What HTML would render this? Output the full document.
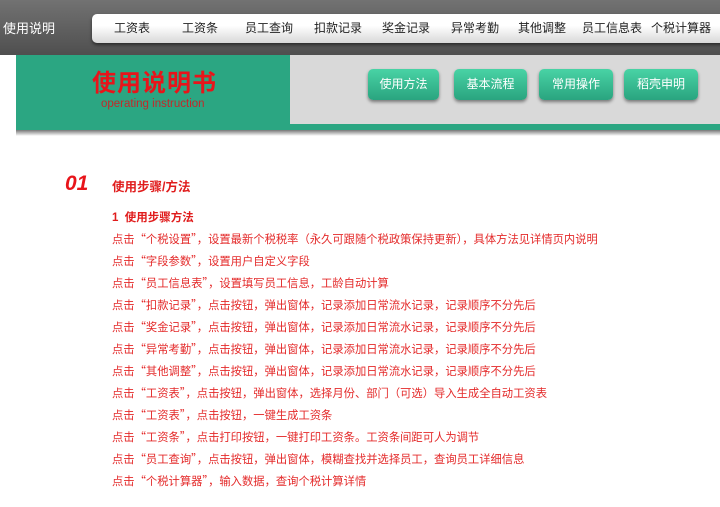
<!DOCTYPE html>
<html><head><meta charset="utf-8"><style>
*{margin:0;padding:0;box-sizing:border-box}
body{width:720px;height:507px;background:#fff;position:relative;overflow:hidden;font-family:"Liberation Sans","Noto Sans CJK SC",sans-serif}
.top{position:absolute;left:0;top:0;width:720px;height:55px;background:linear-gradient(#727272,#4f4f4f)}
.logo{position:absolute;left:3px;top:18px;color:#fff;font-size:13px}
.nav{position:absolute;left:92px;top:14px;width:640px;height:29px;border-radius:5px;background:linear-gradient(#fff 40%,#d8d8d8);box-shadow:0 2px 3px rgba(0,0,0,.5)}
.nav span{position:absolute;top:5px;font-size:12px;color:#222}
.green{position:absolute;left:16px;top:55px;width:275px;height:75px;background:#2ba682}
.gray{position:absolute;left:290px;top:55px;width:430px;height:69px;background:#d9d9d9}
.stripe{position:absolute;left:290px;top:124px;width:430px;height:6px;background:#2ba682}
.shadow{position:absolute;left:16px;top:130px;width:704px;height:6px;background:linear-gradient(#777,#fff)}
.t1{position:absolute;left:92px;top:63px;color:#e8141a;font-size:24px;font-weight:bold;letter-spacing:1px}
.t2{position:absolute;left:101px;top:98px;color:#c4282a;font-size:11.5px}
.btn{position:absolute;top:69px;height:31px;border-radius:5px;background:linear-gradient(#49d3a5,#2aa47f);color:#fff;font-size:12px;text-align:center;line-height:31px;box-shadow:0 2px 3px rgba(0,0,0,.45)}
.num{position:absolute;left:65px;top:172px;color:#e8141a;font-size:21px;font-weight:bold;font-style:italic}
.h{position:absolute;left:112px;top:176px;color:#e01c1c;font-size:12.5px;font-weight:bold}
.l{position:absolute;left:112px;color:#e42a2a;font-size:11.3px;white-space:nowrap}
.q{font-family:"Noto Sans CJK SC",sans-serif}
</style></head><body>
<div class="top"></div>
<div class="logo">使用说明</div>
<div class="nav">
<span style="left:22px">工资表</span><span style="left:90px">工资条</span><span style="left:153px">员工查询</span><span style="left:222px">扣款记录</span><span style="left:290px">奖金记录</span><span style="left:359px">异常考勤</span><span style="left:426px">其他调整</span><span style="left:490px">员工信息表</span><span style="left:559px">个税计算器</span>
</div>
<div class="green"></div><div class="gray"></div><div class="stripe"></div><div class="shadow"></div>
<div class="t1">使用说明书</div>
<div class="t2">operating instruction</div>
<div class="btn" style="left:368px;width:71px">使用方法</div>
<div class="btn" style="left:454px;width:73px">基本流程</div>
<div class="btn" style="left:539px;width:74px">常用操作</div>
<div class="btn" style="left:624px;width:74px">稻壳申明</div>
<div class="num">01</div>
<div class="h">使用步骤/方法</div>
<div class="l" style="top:209px;font-weight:bold;color:#e01c1c;font-size:11.5px">1&nbsp; 使用步骤方法</div>
<div class="l" style="top:231px">点击<span class="q">“</span>个税设置<span class="q">”</span>，设置最新个税税率（永久可跟随个税政策保持更新），具体方法见详情页内说明</div>
<div class="l" style="top:253px">点击<span class="q">“</span>字段参数<span class="q">”</span>，设置用户自定义字段</div>
<div class="l" style="top:275px">点击<span class="q">“</span>员工信息表<span class="q">”</span>，设置填写员工信息，工龄自动计算</div>
<div class="l" style="top:297px">点击<span class="q">“</span>扣款记录<span class="q">”</span>，点击按钮，弹出窗体，记录添加日常流水记录，记录顺序不分先后</div>
<div class="l" style="top:319px">点击<span class="q">“</span>奖金记录<span class="q">”</span>，点击按钮，弹出窗体，记录添加日常流水记录，记录顺序不分先后</div>
<div class="l" style="top:341px">点击<span class="q">“</span>异常考勤<span class="q">”</span>，点击按钮，弹出窗体，记录添加日常流水记录，记录顺序不分先后</div>
<div class="l" style="top:363px">点击<span class="q">“</span>其他调整<span class="q">”</span>，点击按钮，弹出窗体，记录添加日常流水记录，记录顺序不分先后</div>
<div class="l" style="top:385px">点击<span class="q">“</span>工资表<span class="q">”</span>，点击按钮，弹出窗体，选择月份、部门（可选）导入生成全自动工资表</div>
<div class="l" style="top:407px">点击<span class="q">“</span>工资表<span class="q">”</span>，点击按钮，一键生成工资条</div>
<div class="l" style="top:429px">点击<span class="q">“</span>工资条<span class="q">”</span>，点击打印按钮，一键打印工资条。工资条间距可人为调节</div>
<div class="l" style="top:451px">点击<span class="q">“</span>员工查询<span class="q">”</span>，点击按钮，弹出窗体，模糊查找并选择员工，查询员工详细信息</div>
<div class="l" style="top:473px">点击<span class="q">“</span>个税计算器<span class="q">”</span>，输入数据，查询个税计算详情</div>
</body></html>
